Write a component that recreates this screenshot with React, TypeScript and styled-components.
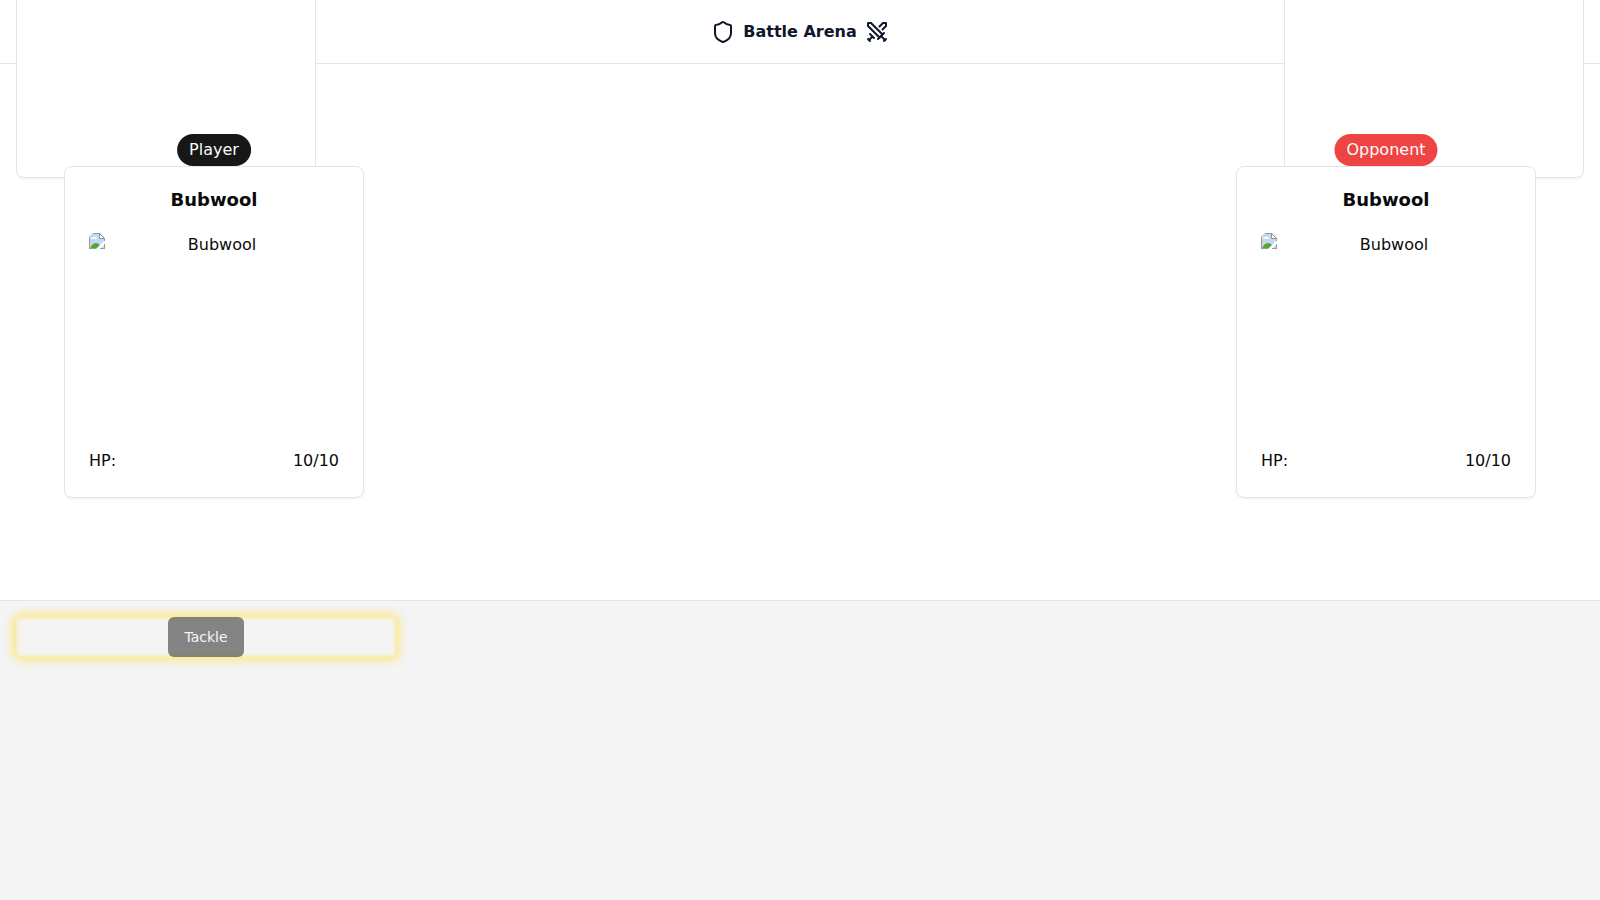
import React from "react";
import styled, { createGlobalStyle } from "styled-components";
import { Shield, Swords } from "lucide-react";

const GlobalStyle = createGlobalStyle`
  *, *::before, *::after { box-sizing: border-box; }
  body {
    margin: 0;
    background: #ffffff;
    color: #0a0a0a;
    font-family: "DejaVu Sans", sans-serif;
    font-size: 16px;
    line-height: 24px;
  }
`;

const Page = styled.div`
  display: flex;
  flex-direction: column;
  min-height: 100vh;
  overflow: hidden;
`;

const Header = styled.header`
  display: flex;
  align-items: center;
  justify-content: center;
  gap: 8px;
  height: 64px;
  border-bottom: 1px solid #e5e5e5;
  color: #0f172a;
`;

const Title = styled.h1`
  margin: 0;
  font-size: 16px;
  line-height: 24px;
  font-weight: 700;
`;

const Arena = styled.main`
  position: relative;
  flex: 1;
  display: flex;
  align-items: center;
  justify-content: space-between;
  padding: 32px 64px;
`;

const surface = `
  background: #ffffff;
  border: 1px solid #e5e5e5;
  border-radius: 8px;
  box-shadow: 0 1px 2px rgba(0, 0, 0, 0.05);
`;

const BenchCard = styled.div<{ $side: "left" | "right" }>`
  ${surface}
  position: absolute;
  top: -218px;
  ${({ $side }) => $side}: 16px;
  width: 300px;
  height: 332px;
`;

const Fighter = styled.section`
  position: relative;
  width: 300px;
`;

const Badge = styled.span<{ $tone: "player" | "opponent" }>`
  position: absolute;
  bottom: 100%;
  left: 50%;
  transform: translateX(-50%);
  padding: 4px 12px;
  border-radius: 16px;
  color: #fafafa;
  background: ${({ $tone }) => ($tone === "player" ? "#171717" : "#ef4444")};
`;

const Card = styled.article`
  ${surface}
  display: flex;
  flex-direction: column;
  gap: 24px;
  padding: 24px;
`;

const Name = styled.h2`
  margin: 0;
  font-size: 18px;
  line-height: 18px;
  font-weight: 700;
  text-align: center;
`;

const Portrait = styled.div`
  display: flex;
  align-items: flex-start;
  height: 192px;
  overflow: hidden;
  border-radius: 6px;
`;

const PortraitLabel = styled.span`
  flex: 1;
  text-align: center;
`;

const Stat = styled.div`
  display: flex;
  justify-content: space-between;
`;

const Moves = styled.footer`
  display: grid;
  grid-template-columns: repeat(4, 1fr);
  align-content: start;
  gap: 16px;
  min-height: calc(100vh / 3);
  padding: 16px;
  border-top: 1px solid #e5e5e5;
  background: #f4f4f4;
`;

const MoveSlot = styled.div`
  display: flex;
  justify-content: center;
  border-radius: 4px;
  box-shadow:
    0 0 10px 3px rgba(255, 224, 60, 0.65),
    inset 0 0 4px 1px rgba(255, 224, 60, 0.45);
`;

const MoveButton = styled.button`
  height: 40px;
  padding: 0 16px;
  border: 0;
  border-radius: 6px;
  background: #171717;
  color: #fafafa;
  font-family: inherit;
  font-size: 14px;
  line-height: 20px;
  opacity: 0.5;
`;

function PictureIcon() {
  return (
    <svg width="16" height="16" viewBox="0 0 16 16" aria-hidden="true">
      <path d="M0 0H11L16 5V16H0Z" fill="#c4d7f5" />
      <path d="M2 6c0-2 2-2 2-1 1-3 4-1 4 1Z" fill="#fff" />
      <path d="M1 16c2-7 8-8 11-2v2Z" fill="#55a833" />
      <path d="M7 16 16 7v4l-5 5Z" fill="#fff" />
      <path d="M.5 16V.5H11M0 15.500h7M11 15.500h5M15.500 5v3M15.500 11v5" fill="none" stroke="#999999" />
      <path d="M10.500 .5v5h5Z" fill="#fff" stroke="#929292" />
    </svg>
  );
}

interface FighterProps {
  role: string;
  tone: "player" | "opponent";
  name: string;
  hp: string;
}

function FighterCard({ role, tone, name, hp }: FighterProps) {
  return (
    <Fighter>
      <Badge $tone={tone}>{role}</Badge>
      <Card>
        <Name>{name}</Name>
        <Portrait>
          <PictureIcon />
          <PortraitLabel>{name}</PortraitLabel>
        </Portrait>
        <Stat>
          <span>HP:</span>
          <span>{hp}</span>
        </Stat>
      </Card>
    </Fighter>
  );
}

export default function App() {
  return (
    <Page>
      <GlobalStyle />
      <Header>
        <Shield size={24} />
        <Title>Battle Arena</Title>
        <Swords size={24} />
      </Header>
      <Arena>
        <BenchCard $side="left" />
        <BenchCard $side="right" />
        <FighterCard role="Player" tone="player" name="Bubwool" hp="10/10" />
        <FighterCard role="Opponent" tone="opponent" name="Bubwool" hp="10/10" />
      </Arena>
      <Moves>
        <MoveSlot>
          <MoveButton type="button" disabled>Tackle</MoveButton>
        </MoveSlot>
      </Moves>
    </Page>
  );
}
